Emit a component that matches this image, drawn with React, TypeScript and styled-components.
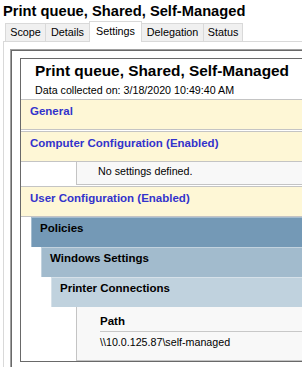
import React from "react";
import styled, { createGlobalStyle } from "styled-components";

const GlobalStyle = createGlobalStyle`
  html, body { margin: 0; padding: 0; background: #ffffff; }
  body { font-family: "Liberation Sans", Arial, sans-serif; color: #000; }
  * { box-sizing: border-box; }
`;

const Page = styled.div`
  width: 302px;
  height: 367px;
  overflow: hidden;
  background: #ffffff;
`;

const WindowTitle = styled.div`
  height: 21px;
  padding: 1px 0 0 3px;
  font-size: 14.7px;
  font-weight: bold;
  line-height: 20px;
  white-space: nowrap;
`;

const TabStrip = styled.div`
  display: flex;
  align-items: flex-start;
  height: 20px;
  padding-left: 5px;
  position: relative;
  z-index: 1;
`;

const Tab = styled.div<{ $width: number; $selected?: boolean }>`
  width: ${(p) => p.$width}px;
  height: ${(p) => (p.$selected ? 21 : 18)}px;
  margin-top: ${(p) => (p.$selected ? 0 : 2)}px;
  margin-left: -1px;
  &:first-child { margin-left: 0; }
  position: relative;
  z-index: ${(p) => (p.$selected ? 2 : 1)};
  background: ${(p) => (p.$selected ? "#ffffff" : "#f0f0f0")};
  border: 1px solid #d9d9d9;
  border-bottom: none;
  font-size: 10.8px;
  line-height: ${(p) => (p.$selected ? 18 : 17)}px;
  text-align: center;
  white-space: nowrap;
`;

const Panel = styled.div`
  margin-left: 3px;
  border-top: 1px solid #d9d9d9;
  border-left: 1px solid #d9d9d9;
  padding: 7px 0 0 6px;
  width: 420px;
  height: 340px;
`;

const Frame = styled.div`
  border-top: 1px solid #a0a0a0;
  border-left: 1px solid #a0a0a0;
  box-shadow: inset 1px 1px 0 #696969;
  padding: 8px 0 0 9px;
  width: 420px;
  height: 340px;
`;

const Report = styled.div`
  border-top: 1px solid #696969;
  border-left: 1px solid #696969;
  border-bottom: 1px solid #696969;
  width: 400px;
  background: #ffffff;
`;

const ReportHeader = styled.div`
  height: 40px;
  padding: 2px 0 0 14px;
  white-space: nowrap;
`;

const ReportTitle = styled.div`
  font-size: 15.4px;
  font-weight: bold;
  line-height: 19px;
  color: #000;
`;

const Collected = styled.div`
  margin-top: 2px;
  font-size: 10.7px;
  line-height: 16px;
  color: #000;
`;

const Section = styled.div`
  margin-bottom: 1px;
`;

const SectionHead = styled.div`
  height: 31px;
  border-top: 1px solid #c4c4c4;
  border-bottom: 1px solid #c4c4c4;
  background: #fef7d6;
  padding-left: 9px;
  font-size: 11.5px;
  font-weight: bold;
  line-height: 22px;
  color: #3333cc;
  white-space: nowrap;
`;

const Content = styled.div<{ $last?: boolean }>`
  margin-left: ${(p) => (p.$last ? 25 : 55)}px;
  border-left: 1px solid #c4c4c4;
  border-bottom: 1px solid #c4c4c4;
  background: #f8f8f8;
  margin-bottom: ${(p) => (p.$last ? -1 : 0)}px;
  position: relative;
`;

const Message = styled.div`
  height: 22px;
  padding-left: 21px;
  font-size: 10.7px;
  line-height: 19px;
  white-space: nowrap;
`;

const Level = styled.div`
  margin-left: 10px;
`;

const LevelHead = styled.div<{ $bg: string }>`
  height: 30px;
  background: ${(p) => p.$bg};
  border-top: 1px solid rgba(255, 255, 255, 0.35);
  border-left: 1px solid rgba(255, 255, 255, 0.35);
  padding-left: 8px;
  font-size: 11.5px;
  font-weight: bold;
  line-height: 20px;
  color: #000;
  white-space: nowrap;
`;

const DataTable = styled.div`
  padding: 6px 0 10px 23px;
`;

const ColumnHead = styled.div`
  font-size: 11.5px;
  font-weight: bold;
  line-height: 16px;
  padding-bottom: 2px;
  border-bottom: 1px solid #c8c8c8;
`;

const Cell = styled.div`
  font-size: 10.7px;
  line-height: 16px;
  padding-top: 2px;
  white-space: nowrap;
`;

const tabs = [
  { label: "Scope", width: 41 },
  { label: "Details", width: 45 },
  { label: "Settings", width: 53, selected: true },
  { label: "Delegation", width: 63 },
  { label: "Status", width: 40 },
];

export default function App() {
  return (
    <Page>
      <GlobalStyle />
      <WindowTitle>Print queue, Shared, Self-Managed</WindowTitle>
      <TabStrip>
        {tabs.map((t) => (
          <Tab key={t.label} $width={t.width} $selected={t.selected}>
            {t.label}
          </Tab>
        ))}
      </TabStrip>
      <Panel>
        <Frame>
          <Report>
            <ReportHeader>
              <ReportTitle>Print queue, Shared, Self-Managed</ReportTitle>
              <Collected>Data collected on: 3/18/2020 10:49:40 AM</Collected>
            </ReportHeader>
            <Section>
              <SectionHead>General</SectionHead>
            </Section>
            <Section>
              <SectionHead>Computer Configuration (Enabled)</SectionHead>
              <Content>
                <Message>No settings defined.</Message>
              </Content>
            </Section>
            <Section>
              <SectionHead>User Configuration (Enabled)</SectionHead>
              <Level>
                <LevelHead $bg="#7499b6">Policies</LevelHead>
                <Level>
                  <LevelHead $bg="#a2bbcd">Windows Settings</LevelHead>
                  <Level>
                    <LevelHead $bg="#c0d2de">Printer Connections</LevelHead>
                    <Content $last>
                      <DataTable>
                        <ColumnHead>Path</ColumnHead>
                        <Cell>\\10.0.125.87\self-managed</Cell>
                      </DataTable>
                    </Content>
                  </Level>
                </Level>
              </Level>
            </Section>
          </Report>
        </Frame>
      </Panel>
    </Page>
  );
}
